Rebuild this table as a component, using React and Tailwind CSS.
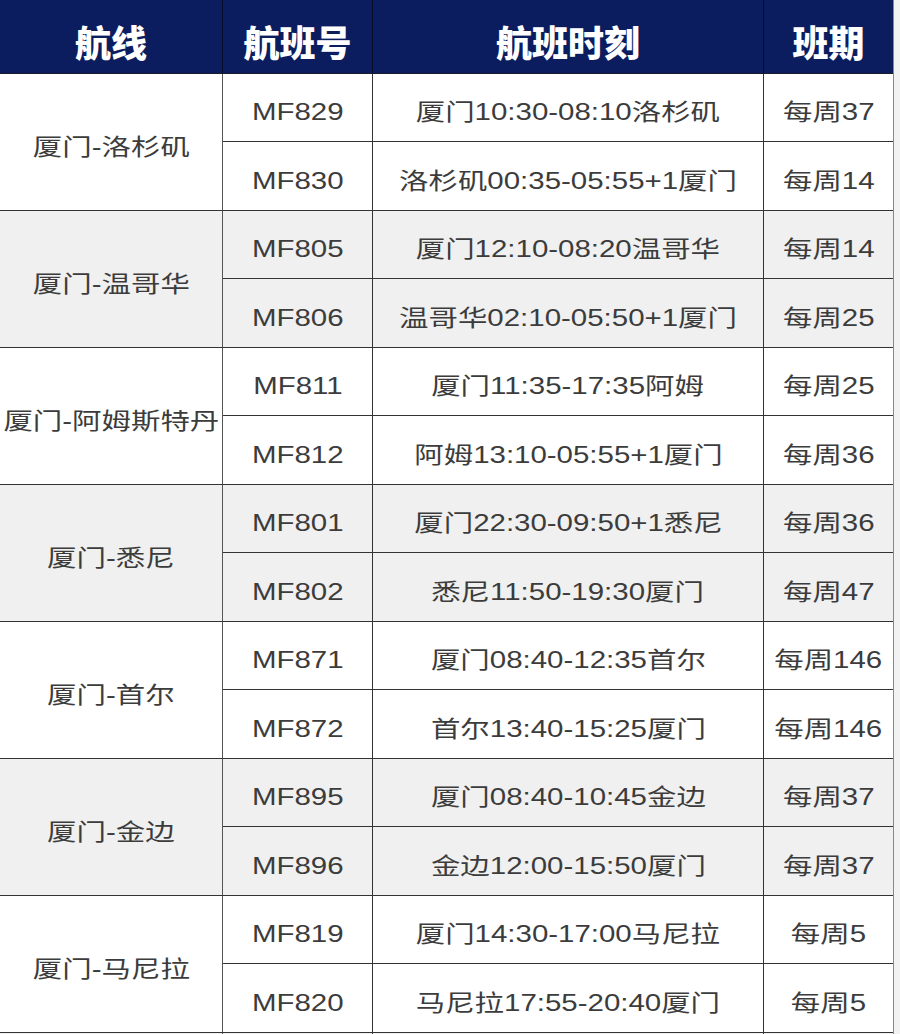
import React from "react";

const groups = [
  {
    route: "厦门-洛杉矶",
    rows: [
      ["MF829", "厦门10:30-08:10洛杉矶", "每周37"],
      ["MF830", "洛杉矶00:35-05:55+1厦门", "每周14"],
    ],
  },
  {
    route: "厦门-温哥华",
    rows: [
      ["MF805", "厦门12:10-08:20温哥华", "每周14"],
      ["MF806", "温哥华02:10-05:50+1厦门", "每周25"],
    ],
  },
  {
    route: "厦门-阿姆斯特丹",
    rows: [
      ["MF811", "厦门11:35-17:35阿姆", "每周25"],
      ["MF812", "阿姆13:10-05:55+1厦门", "每周36"],
    ],
  },
  {
    route: "厦门-悉尼",
    rows: [
      ["MF801", "厦门22:30-09:50+1悉尼", "每周36"],
      ["MF802", "悉尼11:50-19:30厦门", "每周47"],
    ],
  },
  {
    route: "厦门-首尔",
    rows: [
      ["MF871", "厦门08:40-12:35首尔", "每周146"],
      ["MF872", "首尔13:40-15:25厦门", "每周146"],
    ],
  },
  {
    route: "厦门-金边",
    rows: [
      ["MF895", "厦门08:40-10:45金边", "每周37"],
      ["MF896", "金边12:00-15:50厦门", "每周37"],
    ],
  },
  {
    route: "厦门-马尼拉",
    rows: [
      ["MF819", "厦门14:30-17:00马尼拉", "每周5"],
      ["MF820", "马尼拉17:55-20:40厦门", "每周5"],
    ],
  },
];

function T({ children }) {
  return (
    <span className="inline-block whitespace-nowrap scale-x-[1.28] text-[23px] leading-none text-[#3c3c3c]">
      {children}
    </span>
  );
}

export default function App() {
  return (
    <div
      className="w-[900px] h-[1034px] overflow-hidden bg-[#f2f2f2] flex"
      style={{ fontFamily: '"Liberation Sans", "Noto Sans CJK SC", sans-serif' }}
    >
      <div className="w-[894px] flex flex-col border-r border-[#888]">
        {/* header */}
        <div
          className="grid grid-cols-[223px_150px_391px_129px] h-[74px] bg-[#0b1d5e] border-b border-[#1a1a2a] text-white font-black text-[36px]"
          style={{ fontFamily: '"Noto Sans CJK SC", sans-serif' }}
        >
          <div className="flex items-center justify-center border-r border-[#050c2a] pt-[8px]">航线</div>
          <div className="flex items-center justify-center border-r border-[#050c2a] pt-[8px]">航班号</div>
          <div className="flex items-center justify-center border-r border-[#050c2a] pt-[8px]">航班时刻</div>
          <div className="flex items-center justify-center pt-[8px]">班期</div>
        </div>
        {groups.map((g, i) => (
          <div
            key={g.route}
            className={`grid grid-cols-[223px_150px_391px_129px] grid-rows-[68px_68px] border-b border-[#333] ${
              i % 2 === 1 ? "bg-[#f0f0f0]" : "bg-white"
            }`}
          >
            <div className="row-span-2 flex items-center justify-center border-r border-[#555] pt-[10px]">
              <T>{g.route}</T>
            </div>
            {g.rows.map((r, j) => (
              <React.Fragment key={r[0]}>
                <div
                  className={`flex items-center justify-center border-r border-[#333] pt-[10px] ${
                    j === 0 ? "border-b" : ""
                  }`}
                >
                  <T>{r[0]}</T>
                </div>
                <div
                  className={`flex items-center justify-center border-r border-[#333] pt-[10px] ${
                    j === 0 ? "border-b" : ""
                  }`}
                >
                  <T>{r[1]}</T>
                </div>
                <div
                  className={`flex items-center justify-center pt-[10px] ${
                    j === 0 ? "border-b border-[#333]" : ""
                  }`}
                >
                  <T>{r[2]}</T>
                </div>
              </React.Fragment>
            ))}
          </div>
        ))}
        <div className="grid grid-cols-[223px_150px_391px_129px] flex-1 bg-[#f0f0f0]">
          <div className="border-r border-[#555]"></div>
          <div className="border-r border-[#333]"></div>
          <div className="border-r border-[#333]"></div>
          <div></div>
        </div>
      </div>
    </div>
  );
}
